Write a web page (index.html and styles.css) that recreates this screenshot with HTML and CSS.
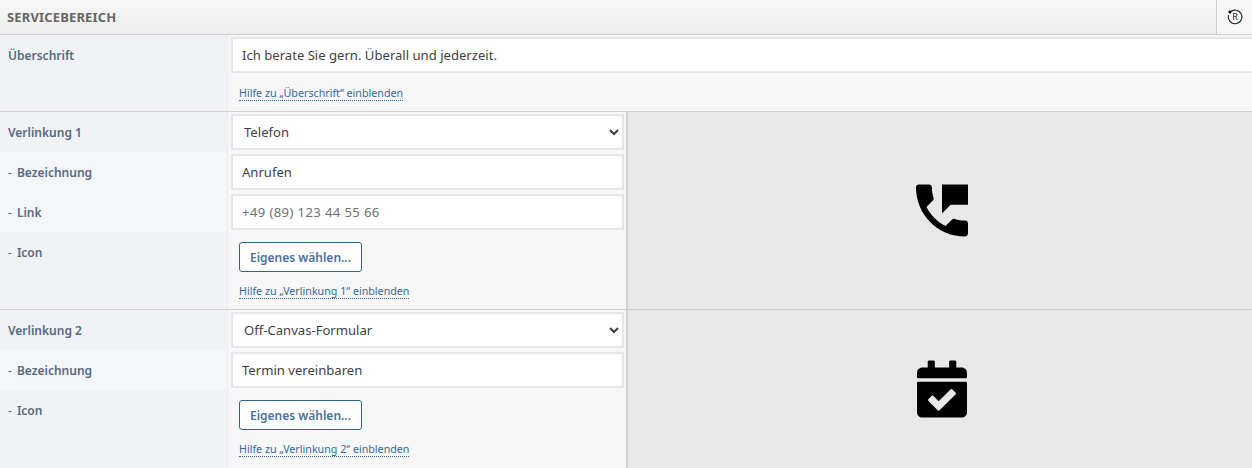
FILE: index.html
```html
<!DOCTYPE html>
<html lang="de">
<head>
<meta charset="utf-8">
<title>Servicebereich</title>
<link rel="stylesheet" href="styles.css">
</head>
<body>
<header class="head">
  <h2 class="head-title">Servicebereich</h2>
  <button class="reset" type="button" aria-label="Zurücksetzen">
    <svg width="16" height="16" viewBox="0 0 16 16" aria-hidden="true">
      <path class="reset-arc" d="M3.2 3.2A6.8 6.8 0 1 1 1.5 6.2"/>
      <circle cx="2.9" cy="3" r="1.5"/>
      <text x="8" y="11.3" class="reset-r">R</text>
    </svg>
  </button>
</header>

<section class="group">
  <div class="fields fields-full">
    <div class="row row-top">
      <label class="label">Überschrift</label>
      <div class="control">
        <input class="input" type="text" value="Ich berate Sie gern. Überall und jederzeit.">
        <a class="help" href="#">Hilfe zu „Überschrift“ einblenden</a>
      </div>
    </div>
  </div>
</section>

<section class="group">
  <div class="fields">
    <div class="row">
      <label class="label">Verlinkung 1</label>
      <div class="control"><select class="input select"><option>Telefon</option></select></div>
    </div>
    <div class="row row-light">
      <label class="label"><span class="dash">-</span>Bezeichnung</label>
      <div class="control"><input class="input" type="text" value="Anrufen"></div>
    </div>
    <div class="row row-light">
      <label class="label"><span class="dash">-</span>Link</label>
      <div class="control"><input class="input input-phone" type="text" placeholder="+49 (89) 123 44 55 66"></div>
    </div>
    <div class="row">
      <label class="label"><span class="dash">-</span>Icon</label>
      <div class="control">
        <button class="pick" type="button">Eigenes wählen...</button>
        <a class="help help-after" href="#">Hilfe zu „Verlinkung 1“ einblenden</a>
      </div>
    </div>
  </div>
  <div class="preview">
    <svg class="icon-phone" viewBox="3 3 18 18" aria-hidden="true"><path d="M20 15.5c-1.25 0-2.45-.2-3.57-.57-.35-.11-.74-.03-1.02.24l-2.2 2.2c-2.83-1.44-5.15-3.75-6.59-6.58l2.2-2.21c.28-.27.36-.66.25-1.01C8.7 6.45 8.5 5.25 8.5 4c0-.55-.45-1-1-1H4c-.55 0-1 .45-1 1 0 9.39 7.61 17 17 17 .55 0 1-.45 1-1v-3.5c0-.55-.45-1-1-1zM12 3v10l3-3h6V3h-9z"/></svg>
  </div>
</section>

<section class="group group-last">
  <div class="fields">
    <div class="row">
      <label class="label">Verlinkung 2</label>
      <div class="control"><select class="input select"><option>Off-Canvas-Formular</option></select></div>
    </div>
    <div class="row row-light">
      <label class="label"><span class="dash">-</span>Bezeichnung</label>
      <div class="control"><input class="input" type="text" value="Termin vereinbaren"></div>
    </div>
    <div class="row row-fill">
      <label class="label"><span class="dash">-</span>Icon</label>
      <div class="control">
        <button class="pick" type="button">Eigenes wählen...</button>
        <a class="help help-after" href="#">Hilfe zu „Verlinkung 2“ einblenden</a>
      </div>
    </div>
  </div>
  <div class="preview">
    <svg class="icon-cal" viewBox="0 0 448 512" aria-hidden="true"><path d="M436 160H12c-6.627 0-12-5.373-12-12v-36c0-26.51 21.49-48 48-48h48V12c0-6.627 5.373-12 12-12h40c6.627 0 12 5.373 12 12v52h128V12c0-6.627 5.373-12 12-12h40c6.627 0 12 5.373 12 12v52h48c26.51 0 48 21.49 48 48v36c0 6.627-5.373 12-12 12zM12 192h424c6.627 0 12 5.373 12 12v260c0 26.51-21.49 48-48 48H48c-26.51 0-48-21.49-48-48V204c0-6.627 5.373-12 12-12zm333.296 95.947l-28.169-28.398c-4.667-4.705-12.265-4.736-16.97-.068L194.12 364.665l-45.98-46.352c-4.667-4.705-12.265-4.736-16.97-.068l-28.397 28.17c-4.705 4.667-4.736 12.265-.068 16.97l82.601 83.269c4.667 4.705 12.265 4.736 16.97.068l142.953-141.805c4.705-4.667 4.736-12.265.068-16.97z"/></svg>
  </div>
</section>
</body>
</html>
```

FILE: styles.css
```css
* { box-sizing: border-box; }
html, body { margin: 0; padding: 0; }
body {
  display: flex;
  flex-direction: column;
  width: 1252px;
  height: 468px;
  overflow: hidden;
  font-family: "Noto Sans", "Open Sans", sans-serif;
  font-size: 13px;
  color: #333;
  background: #f7f7f7;
}
.head {
  display: flex;
  justify-content: space-between;
  height: 35px;
  border-bottom: 1px solid #cfcfcf;
  background: linear-gradient(#f7f7f7, #eeeeee);
}
.head-title {
  margin: 0;
  padding: 9px 0 0 7px;
  font-size: 13px;
  line-height: 16px;
  font-weight: 700;
  letter-spacing: .15px;
  text-transform: uppercase;
  color: #666;
}
.reset {
  display: flex;
  align-items: center;
  justify-content: center;
  width: 36px;
  padding: 0;
  border: 0;
  border-left: 1px solid #ccc;
  background: #f6f6f6;
}
.reset-arc { fill: none; stroke: #222; stroke-width: 1.1; }
.reset-r { font-family: "Noto Sans", sans-serif; font-size: 9px; text-anchor: middle; fill: #222; }

.group {
  display: flex;
  border-bottom: 1px solid #cfcfcf;
}
.group-last {
  flex: 1 1 auto;
  border-bottom: 0;
}
.fields {
  display: flex;
  flex-direction: column;
  flex: 0 0 628px;
  border-right: 2px solid #cfcfcf;
}
.fields-full {
  flex: 1 1 auto;
  min-width: 0;
  border-right: 0;
}
.row { display: flex; }
.row-fill { flex: 1 1 auto; }
.label {
  flex: 0 0 228px;
  padding: 12px 0 0 8px;
  font-size: 12px;
  line-height: 17px;
  font-weight: 600;
  color: #566a80;
  background: #f0f2f6;
  border-right: 1px solid #eaecef;
}
.row-light .label { background: #f4f6fa; }
.dash {
  margin-right: 5px;
  font-weight: 400;
  color: #5f6f82;
}
.control {
  flex: 1 1 auto;
  min-width: 0;
  padding: 2px 1px 2px 3px;
  display: flex;
  flex-direction: column;
  align-items: flex-start;
  background: #f7f7f7;
}
.input {
  display: block;
  width: 393px;
  height: 36px;
  margin: 0;
  padding: 0 9px;
  border: 2px solid #e6e6e6;
  border-radius: 0;
  background: #fff;
  font: inherit;
  font-size: 13.1px;
  color: #3f3f3f;
  outline: none;
}
.input-phone::placeholder {
  color: #707070;
  opacity: 1;
  letter-spacing: .38px;
}
.select { padding: 0 7px; }
.row-top { height: 76px; }
.row-top .input { width: 1030px; flex: none; }
.help {
  margin: 13px 0 0 8px;
  font-size: 10.7px;
  line-height: 14px;
  color: #36689a;
  text-decoration: none;
  border-bottom: 1px dotted #2d6496;
}
.pick {
  margin: 8px 0 0 8px;
  height: 30px;
  width: 123px;
  padding: 0;
  border: 1px solid #2a6592;
  border-radius: 3px;
  background: #fff;
  font: inherit;
  font-size: 12px;
  font-weight: 600;
  color: #4a7199;
}
.help-after { margin-top: 12px; margin-bottom: 8px; }
.preview {
  flex: 1 1 auto;
  display: flex;
  align-items: center;
  justify-content: center;
  padding-left: 4px;
  background: #e8e8e8;
}
.icon-phone { width: 52px; height: 53px; }
.icon-cal { width: 50px; height: 58px; }
```
